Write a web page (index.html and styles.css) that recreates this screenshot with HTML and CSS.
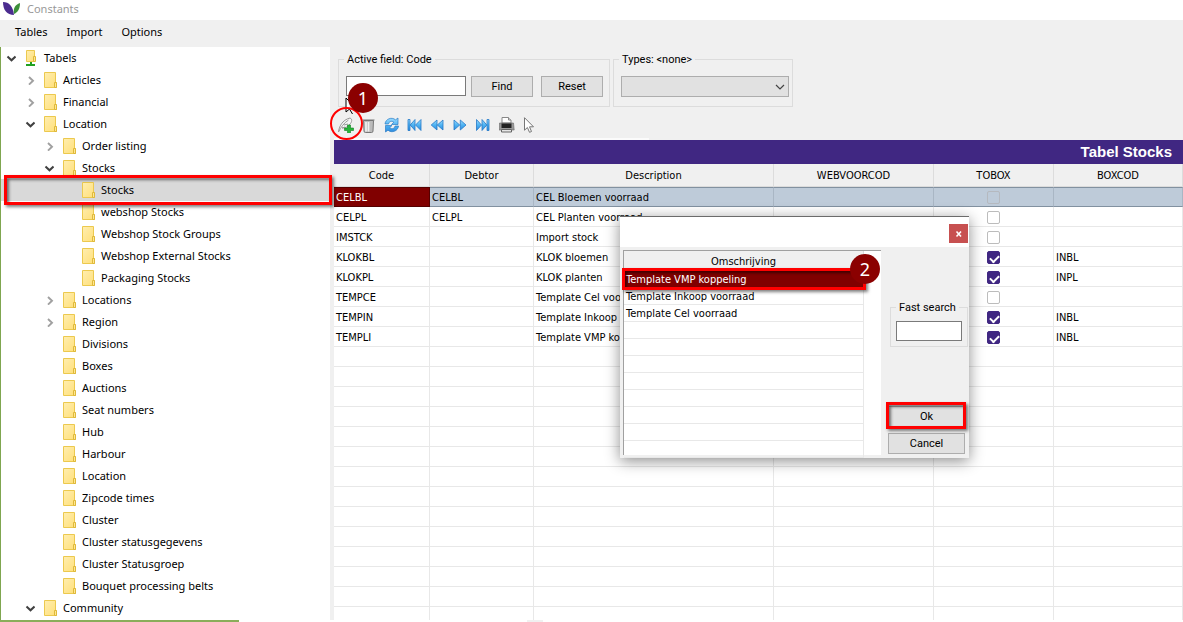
FILE: index.html
```html
<!DOCTYPE html>
<html lang="en">
<head>
<meta charset="utf-8">
<title>Constants</title>
<link rel="stylesheet" href="styles.css">
</head>
<body>
<svg class="defs" aria-hidden="true">
  <defs>
    <linearGradient id="paper" x1="0" y1="0" x2="1" y2="1"><stop offset="0" stop-color="#ffeeb0"/><stop offset="1" stop-color="#ffdf78"/></linearGradient>
    <linearGradient id="blue" x1="0" y1="0" x2="0" y2="1"><stop offset="0" stop-color="#9fdcff"/><stop offset=".5" stop-color="#4fb4f2"/><stop offset="1" stop-color="#2f8be0"/></linearGradient>
    <symbol id="folder" viewBox="0 0 14 16"><path d="M.5.5h11v9.500l1 1v4.500h-12z" fill="url(#paper)" stroke="#ecc94e"/><path d="M10.500 10.500h2v5h-2z" fill="#ffe793" stroke="#dfb93a"/></symbol>
    <symbol id="root" viewBox="0 0 14 16"><path d="M1.500.5h8v11h-8z" fill="url(#paper)" stroke="#ecc94e"/><path d="M8.500 6.500h2v5h-2z" fill="#ffe793" stroke="#dfb93a"/><path d="M5 12h2v2h3v2H1v-2h4z" fill="#21a121"/></symbol>
    <symbol id="open" viewBox="0 0 10 10"><path d="M1.500 3.500 5.500 7.300l4-3.800" fill="none" stroke="#404040" stroke-width="2"/></symbol>
    <symbol id="closed" viewBox="0 0 10 10"><path d="M4 2 8 5.800 4 9.600" fill="none" stroke="#a0a0a0" stroke-width="1.900"/></symbol>
  </defs>
</svg>

<header class="titlebar">
  <svg class="logo" viewBox="0 0 18 14"><path d="M1 0c6 0 10 4 11 13C5 13 1 8 1 0z" fill="#4b2c8f"/><path d="M12 12c-1-6 1-9 6-11 0 6-2 9-6 11z" fill="#3c8f3a"/></svg>
  <span>Constants</span>
</header>
<nav class="menubar">
  <button>Tables</button><button>Import</button><button>Options</button>
</nav>

<div class="workspace">
  <ul class="tree">
    <li class="l0"><svg class="arrow"><use href="#open"/></svg><svg class="icon"><use href="#root"/></svg>Tabels</li>
    <li class="l1"><svg class="arrow"><use href="#closed"/></svg><svg class="icon"><use href="#folder"/></svg>Articles</li>
    <li class="l1"><svg class="arrow"><use href="#closed"/></svg><svg class="icon"><use href="#folder"/></svg>Financial</li>
    <li class="l1"><svg class="arrow"><use href="#open"/></svg><svg class="icon"><use href="#folder"/></svg>Location</li>
    <li class="l2"><svg class="arrow"><use href="#closed"/></svg><svg class="icon"><use href="#folder"/></svg>Order listing</li>
    <li class="l2"><svg class="arrow"><use href="#open"/></svg><svg class="icon"><use href="#folder"/></svg>Stocks</li>
    <li class="l3 selected"><svg class="arrow"></svg><svg class="icon"><use href="#folder"/></svg>Stocks<span class="mark mark-tree"></span></li>
    <li class="l3"><svg class="arrow"></svg><svg class="icon"><use href="#folder"/></svg>webshop Stocks</li>
    <li class="l3"><svg class="arrow"></svg><svg class="icon"><use href="#folder"/></svg>Webshop Stock Groups</li>
    <li class="l3"><svg class="arrow"></svg><svg class="icon"><use href="#folder"/></svg>Webshop External Stocks</li>
    <li class="l3"><svg class="arrow"></svg><svg class="icon"><use href="#folder"/></svg>Packaging Stocks</li>
    <li class="l2"><svg class="arrow"><use href="#closed"/></svg><svg class="icon"><use href="#folder"/></svg>Locations</li>
    <li class="l2"><svg class="arrow"><use href="#closed"/></svg><svg class="icon"><use href="#folder"/></svg>Region</li>
    <li class="l2"><svg class="arrow"></svg><svg class="icon"><use href="#folder"/></svg>Divisions</li>
    <li class="l2"><svg class="arrow"></svg><svg class="icon"><use href="#folder"/></svg>Boxes</li>
    <li class="l2"><svg class="arrow"></svg><svg class="icon"><use href="#folder"/></svg>Auctions</li>
    <li class="l2"><svg class="arrow"></svg><svg class="icon"><use href="#folder"/></svg>Seat numbers</li>
    <li class="l2"><svg class="arrow"></svg><svg class="icon"><use href="#folder"/></svg>Hub</li>
    <li class="l2"><svg class="arrow"></svg><svg class="icon"><use href="#folder"/></svg>Harbour</li>
    <li class="l2"><svg class="arrow"></svg><svg class="icon"><use href="#folder"/></svg>Location</li>
    <li class="l2"><svg class="arrow"></svg><svg class="icon"><use href="#folder"/></svg>Zipcode times</li>
    <li class="l2"><svg class="arrow"></svg><svg class="icon"><use href="#folder"/></svg>Cluster</li>
    <li class="l2"><svg class="arrow"></svg><svg class="icon"><use href="#folder"/></svg>Cluster statusgegevens</li>
    <li class="l2"><svg class="arrow"></svg><svg class="icon"><use href="#folder"/></svg>Cluster Statusgroep</li>
    <li class="l2"><svg class="arrow"></svg><svg class="icon"><use href="#folder"/></svg>Bouquet processing belts</li>
    <li class="l1"><svg class="arrow"><use href="#open"/></svg><svg class="icon"><use href="#folder"/></svg>Community</li>
  </ul>

  <main class="content">
    <div class="filters">
      <div class="group group-search">
        <label class="legend" for="code">Active field: Code</label>
        <input class="text" id="code" type="text">
        <button class="btn">Find</button>
        <button class="btn">Reset</button>
      </div>
      <div class="group group-types">
        <label class="legend" for="types">Types: &lt;none&gt;</label>
        <div class="combo">
          <select id="types"><option></option></select>
          <svg viewBox="0 0 10 6"><path d="M1 1l4 4 4-4" fill="none" stroke="#444" stroke-width="1.200"/></svg>
        </div>
      </div>
    </div>

    <div class="toolbar">
      <button aria-label="Add"><svg viewBox="0 0 16 16"><path d="M.5 15C1 10 4 3 12 1c2.500 1 2 4 0 6-2 3-5 4-8 4" fill="#f6f6f6" stroke="#999"/><path d="M.5 15C3 10 6 6 10.500 3M4 11l3-1M6 8l4-1" fill="none" stroke="#999"/><path d="M9.500 8h3v3h3v2.500h-3v3h-3v-3h-3V11h3z" fill="#27b53a" stroke="#128024" stroke-width=".6"/></svg></button>
      <button aria-label="Delete"><svg viewBox="0 0 16 16"><path d="M2.500 3.500h10l-.5 10.500q0 1.500-1.500 1.500h-6Q3 15.500 3 14z" fill="#bbb" stroke="#777"/><path d="M5 5v9.500M7.500 5v9.500" stroke="#f0f0f0" stroke-width="1.700"/><path d="M1.500 3h12" stroke="#777"/></svg></button>
      <button aria-label="Refresh"><svg viewBox="0 0 16 16"><path d="M1 7C1.500 2 7.500-.5 11.500 2.800L14 1v6.500H7.500l2.300-2.300C7.500 3.500 5 4.500 4.500 7zM14.500 9c-.5 5-6.500 7.500-10.500 4.200L1.500 15V8.500H8l-2.300 2.300c2.300 1.700 5 .7 5.300-1.800z" fill="url(#blue)" stroke="#2b7cc4" stroke-width=".7"/></svg></button>
      <button aria-label="First"><svg viewBox="0 0 16 16"><path d="M1 2.500h2v11H1zM8 2.500v11L3.200 8zM14 2.500v11L8.500 8z" fill="url(#blue)" stroke="#2478c8" stroke-width=".8"/></svg></button>
      <button aria-label="Previous"><svg viewBox="0 0 16 16"><path d="M7 3v10L1.200 8zM13 3v10L7.300 8z" fill="url(#blue)" stroke="#2478c8" stroke-width=".8"/></svg></button>
      <button aria-label="Next"><svg viewBox="0 0 16 16"><path d="M1 3v10l5.700-5zM7.300 3v10L13 8z" fill="url(#blue)" stroke="#2478c8" stroke-width=".8"/></svg></button>
      <button aria-label="Last"><svg viewBox="0 0 16 16"><path d="M.5 2.500v11L5.500 8zM6 2.500v11L10.800 8zM11 2.500h2v11h-2z" fill="url(#blue)" stroke="#2478c8" stroke-width=".8"/></svg></button>
      <button aria-label="Print"><svg viewBox="0 0 16 16"><path d="M3 6V.5h6.500L12 3v3z" fill="#fff" stroke="#888"/><path d="M9.500.5V3H12" fill="#ddd" stroke="#888"/><path d="M.5 6h14l.7 7H-.2z" fill="#999" stroke="#666" stroke-width=".6"/><path d="M2.500 6.500h10V11h-10z" fill="#222"/><path d="M2.500 12.500h10V15h-10z" fill="#e6e6e6" stroke="#666"/></svg></button>
      <button aria-label="Select"><svg viewBox="0 0 16 16"><path d="M2.500 .7v12.500l2.900-2.700 2.100 4.800 2-.8-2-4.700h4z" fill="#fff" stroke="#777"/></svg></button>
      <svg class="pointer" viewBox="0 0 12 18"><path d="M1 1v14l3.500-3 3 5M1 1l9 9H7" fill="#fff" stroke="#000"/></svg>
      <span class="ring"></span>
      <span class="badge badge-one">1</span>
    </div>
    <div class="strip"></div>

    <h1 class="banner">Tabel Stocks</h1>

    <div class="grid-wrap">
      <table class="grid">
        <colgroup><col class="c-code"><col class="c-debtor"><col class="c-desc"><col class="c-web"><col class="c-tobox"><col></colgroup>
        <thead><tr><th>Code</th><th>Debtor</th><th>Description</th><th>WEBVOORCOD</th><th>TOBOX</th><th>BOXCOD</th></tr></thead>
        <tbody>
          <tr class="current"><td>CELBL</td><td>CELBL</td><td>CEL Bloemen voorraad</td><td></td><td><input type="checkbox" aria-label="To box"></td><td></td></tr>
          <tr><td>CELPL</td><td>CELPL</td><td>CEL Planten voorraad</td><td></td><td><input type="checkbox" aria-label="To box"></td><td></td></tr>
          <tr><td>IMSTCK</td><td></td><td>Import stock</td><td></td><td><input type="checkbox" aria-label="To box"></td><td></td></tr>
          <tr><td>KLOKBL</td><td></td><td>KLOK bloemen</td><td></td><td><input type="checkbox" aria-label="To box" checked></td><td>INBL</td></tr>
          <tr><td>KLOKPL</td><td></td><td>KLOK planten</td><td></td><td><input type="checkbox" aria-label="To box" checked></td><td>INPL</td></tr>
          <tr><td>TEMPCE</td><td></td><td>Template Cel voorraad</td><td></td><td><input type="checkbox" aria-label="To box"></td><td></td></tr>
          <tr><td>TEMPIN</td><td></td><td>Template Inkoop voorraad</td><td></td><td><input type="checkbox" aria-label="To box" checked></td><td>INBL</td></tr>
          <tr><td>TEMPLI</td><td></td><td>Template VMP koppeling</td><td></td><td><input type="checkbox" aria-label="To box" checked></td><td>INBL</td></tr>
          <tr><td></td><td></td><td></td><td></td><td></td><td></td></tr>
          <tr><td></td><td></td><td></td><td></td><td></td><td></td></tr>
          <tr><td></td><td></td><td></td><td></td><td></td><td></td></tr>
          <tr><td></td><td></td><td></td><td></td><td></td><td></td></tr>
          <tr><td></td><td></td><td></td><td></td><td></td><td></td></tr>
          <tr><td></td><td></td><td></td><td></td><td></td><td></td></tr>
          <tr><td></td><td></td><td></td><td></td><td></td><td></td></tr>
          <tr><td></td><td></td><td></td><td></td><td></td><td></td></tr>
          <tr><td></td><td></td><td></td><td></td><td></td><td></td></tr>
          <tr><td></td><td></td><td></td><td></td><td></td><td></td></tr>
          <tr><td></td><td></td><td></td><td></td><td></td><td></td></tr>
          <tr><td></td><td></td><td></td><td></td><td></td><td></td></tr>
          <tr><td></td><td></td><td></td><td></td><td></td><td></td></tr>
          <tr><td></td><td></td><td></td><td></td><td></td><td></td></tr>
        </tbody>
      </table>
    </div>
  </main>
</div>
<footer class="edge"><span class="edge-green"></span><span class="edge-grey"></span></footer>

<div class="dialog" role="dialog" aria-label="Omschrijving">
  <div class="dialog-title"><button class="close" aria-label="Close"><svg viewBox="0 0 8 8"><path d="M1.500 1.500l4.500 5M6 1.500l-4.500 5" stroke="#fff" stroke-width="1.600"/></svg></button></div>
  <div class="dialog-body">
    <div class="list">
      <table>
        <thead><tr><th>Omschrijving</th></tr></thead>
        <tbody>
          <tr class="picked"><td>Template VMP koppeling</td></tr>
          <tr><td>Template Inkoop voorraad</td></tr>
          <tr><td>Template Cel voorraad</td></tr>
          <tr><td></td></tr><tr><td></td></tr><tr><td></td></tr><tr><td></td></tr><tr><td></td></tr><tr><td></td></tr><tr><td></td></tr><tr><td></td></tr>
        </tbody>
      </table>
      <span class="mark mark-list"></span>
      <span class="badge badge-two">2</span>
    </div>
    <div class="side">
      <div class="group group-fast">
        <label class="legend" for="fast">Fast search</label>
        <input class="text" id="fast" type="text">
      </div>
      <div class="actions">
        <div class="ok"><button class="btn">Ok</button><span class="mark mark-ok"></span></div>
        <button class="btn">Cancel</button>
      </div>
    </div>
  </div>
</div>
</body>
</html>
```
FILE: styles.css
```css
* { box-sizing: border-box; }
body {
  margin: 0;
  height: 100vh;
  display: flex;
  flex-direction: column;
  position: relative;
  overflow: hidden;
  background: #f0f0f0;
  color: #000;
  font: 11px/14px Roboto, "Liberation Sans", sans-serif;
}
.defs { position: absolute; width: 0; height: 0; }
button, input, select { font: inherit; color: inherit; margin: 0; padding: 0; border-radius: 0; }

.titlebar {
  flex: none;
  height: 20px;
  display: flex;
  align-items: center;
  gap: 7px;
  padding: 0 0 3px 2px;
  background: #fff;
  color: #999;
  font: 11px/16px "Noto Sans", sans-serif;
}
.logo { width: 18px; height: 14px; }
.menubar {
  flex: none;
  height: 27px;
  display: flex;
  align-items: center;
  gap: 19px;
  padding: 0 15px 4px;
  font: 11px/16px "Noto Sans", sans-serif;
}
.menubar button { border: 0; background: none; }

.workspace { flex: 1; min-height: 0; display: flex; border-left: 1px solid #7fa650; }
.tree {
  flex: none;
  width: 329px;
  margin: 0;
  padding: 0;
  list-style: none;
  background: #fff;
  font: 11px/16px "Noto Sans", sans-serif;
}
.tree li { position: relative; display: flex; align-items: center; height: 22px; white-space: nowrap; }
.tree .l0 { padding-left: 5px; }
.tree .l1 { padding-left: 24px; }
.tree .l2 { padding-left: 43px; }
.tree .l3 { padding-left: 62px; }
.tree .selected { background: #d9d9d9; }
.arrow { flex: none; width: 10px; height: 10px; margin-right: 9px; }
.icon { flex: none; width: 14px; height: 16px; margin-right: 5px; }

.mark {
  position: absolute;
  z-index: 2;
  border: 3px solid #f00;
  box-shadow: 2px 2px 3px rgba(0, 0, 0, .5), inset 2px 2px 3px rgba(0, 0, 0, .5);
  pointer-events: none;
}
.mark-tree { left: 3px; right: -2px; top: -4px; bottom: -4px; }
.mark-list { left: -2px; right: 15px; top: 17px; height: 22px; }
.mark-ok { inset: -4px -1px -2px -2px; }
.badge {
  position: absolute;
  z-index: 3;
  width: 30px;
  height: 30px;
  border-radius: 50%;
  background: #8b0000;
  color: #fff;
  font: 18px/30px "Noto Sans", sans-serif;
  text-align: center;
}
.badge-one { left: 14px; top: -24px; }
.badge-two { right: 1px; top: 3px; }

.content { flex: 1; min-width: 0; display: flex; flex-direction: column; margin-left: 4px; }
.filters { flex: none; display: flex; gap: 3px; padding: 12px 4px 0; }
.group { position: relative; display: flex; border: 1px solid #dcdcdc; }
.legend { position: absolute; left: 5px; top: -7px; padding: 0 3px; background: #f0f0f0; white-space: nowrap; }
.group-search { width: 272px; height: 48px; padding: 16px 5px 0 7px; }
.group-search .text { flex: none; width: 120px; margin-right: 5px; }
.group-search .btn { flex: none; width: 62px; margin-right: 8px; }
.group-types { width: 180px; height: 48px; padding: 16px 3px 0 7px; }
.text { height: 20px; padding: 0 3px; border: 1px solid #7a7a7a; background: #fff; }
.btn { height: 21px; padding-top: 1px; border: 1px solid #adadad; background: #e1e1e1; }
.combo { position: relative; flex: 1; }
.combo select { width: 100%; height: 21px; border: 1px solid #adadad; background: #e1e1e1; appearance: none; }
.combo svg { position: absolute; right: 4px; top: 8px; width: 10px; height: 6px; pointer-events: none; }

.toolbar { flex: none; position: relative; display: flex; gap: 7px; height: 31px; padding: 10px 4px 0; }
.toolbar button { width: 16px; height: 16px; border: 0; background: none; }
.toolbar button svg { display: block; width: 16px; height: 16px; }
.pointer { position: absolute; left: 11px; top: -10px; width: 12px; height: 18px; }
.ring { position: absolute; z-index: 2; left: -4px; top: 0; width: 33px; height: 33px; border: 2px solid #f00; border-radius: 50%; }
.strip { flex: none; width: 315px; height: 2px; background: #fbfbfb; }
.banner {
  flex: none;
  margin: 0;
  padding: 0 11px;
  background: #402782;
  color: #fff;
  font: bold 15px/24px "Liberation Sans", sans-serif;
  text-align: right;
}

.grid-wrap { flex: 1; min-height: 0; overflow: hidden; background: #fff; }
table { border-collapse: separate; border-spacing: 0; table-layout: fixed; width: 100%; }
th, td { padding: 0 2px; font: 11px/14px "DejaVu Sans Condensed", "DejaVu Sans", sans-serif; white-space: nowrap; overflow: hidden; }
td { padding-top: 2px; border-right: 1px solid #e8e8e8; border-bottom: 1px solid #e8e8e8; text-align: left; }
th { padding-top: 2px; background: #f0f0f0; border-right: 1px solid #dcdcdc; border-bottom: 1px solid #dcdcdc; text-align: center; }
.grid th { height: 23px; }
.grid td { height: 20px; }
.grid td:nth-child(5) { padding-top: 1px; }
.c-code { width: 96px; }
.c-debtor { width: 104px; }
.c-desc { width: 240px; }
.c-web { width: 160px; }
.c-tobox { width: 120px; }
.current td { background: #becbd9; border-top: 1px solid #8291a0; border-bottom-color: #8291a0; border-right-color: #a9b6c4; }
.current td:first-child { background: #800000; color: #fff; border-color: #500; }
.grid input {
  appearance: none;
  position: relative;
  display: block;
  width: 13px;
  height: 13px;
  margin: 0 auto;
  border: 1px solid #bcbcbc;
  border-radius: 2px;
  background: #fff;
}
.grid .current input { background: transparent; border-color: #b5b9bf; }
.grid input:checked { background: #402782; border-color: #402782; }
.grid input:checked::after {
  content: "";
  position: absolute;
  left: 2px;
  top: 3px;
  width: 7px;
  height: 4px;
  border: solid #fff;
  border-width: 0 0 2px 2px;
  transform: rotate(-45deg);
}

.edge { flex: none; display: flex; height: 2px; background: #fff; }
.edge-green { width: 239px; margin-right: 288px; background: #8aad5a; }
.edge-grey { width: 16px; background: #f0f0f0; }

.dialog {
  position: absolute;
  z-index: 5;
  left: 620px;
  top: 216px;
  width: 349px;
  border-top: 1px solid #6b6b6b;
  background: #f0f0f0;
  box-shadow: 0 3px 14px rgba(0, 0, 0, .45);
}
.dialog-title { display: flex; justify-content: flex-end; height: 30px; padding: 7px 1px 0 0; background: #fff; }
.close { width: 19px; height: 19px; border: 0; background: #c75050; display: flex; align-items: center; justify-content: center; }
.close svg { width: 8px; height: 8px; }
.dialog-body { display: flex; gap: 7px; padding: 3px 1px 3px 3px; }
.list { position: relative; flex: 1; height: 205px; border-top: 1px solid #a0a0a0; border-left: 1px solid #a0a0a0; background: #fff; }
.list table { width: 240px; }
.list th { height: 20px; border-bottom: 0; }
.list td { height: 17px; }
.list .picked td { background: #800000; color: #fff; }
.side { width: 80px; display: flex; flex-direction: column; }
.group-fast { width: 78px; height: 40px; margin: 57px 0 0 2px; padding: 13px 5px 0; }
.group-fast .text { width: 100%; }
.group-fast .legend { left: 5px; }
.actions { display: flex; flex-direction: column; gap: 6px; margin-top: 59px; width: 77px; }
.ok { position: relative; display: flex; }
.actions .btn { width: 100%; }
```
